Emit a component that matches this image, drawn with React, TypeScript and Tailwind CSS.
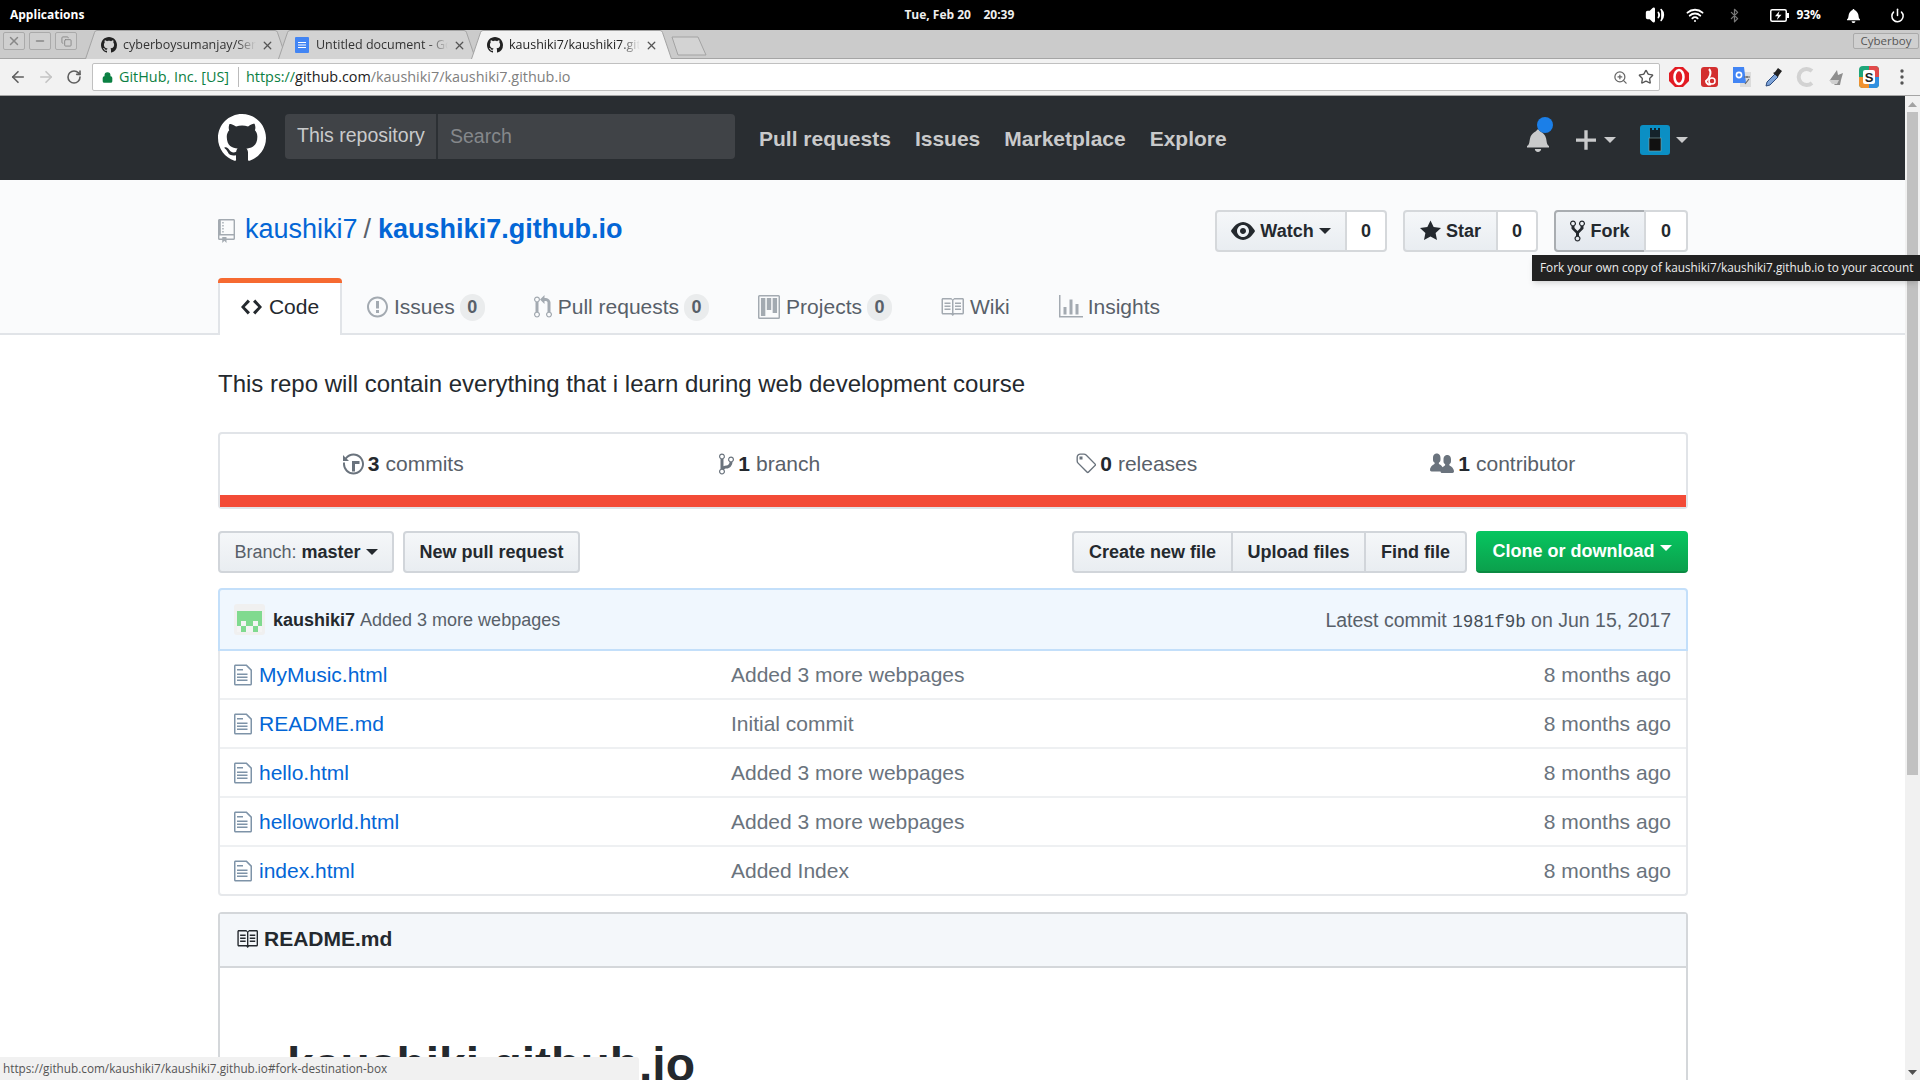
import React from 'react';
import { Volume2, Wifi, Bluetooth, Power, ArrowLeft, ArrowRight, RotateCw, Lock, ZoomIn, Star, X, Minus, Copy } from 'lucide-react';

const P = {
  github: 'M8 0C3.58 0 0 3.58 0 8c0 3.54 2.29 6.53 5.47 7.59.4.07.55-.17.55-.38 0-.19-.01-.82-.01-1.49-2.01.37-2.53-.49-2.69-.94-.09-.23-.48-.94-.82-1.13-.28-.15-.68-.52-.01-.53.63-.01 1.08.58 1.23.82.72 1.21 1.87.87 2.33.66.07-.52.28-.87.51-1.07-1.78-.2-3.64-.89-3.64-3.95 0-.87.31-1.59.82-2.15-.08-.2-.36-1.02.08-2.12 0 0 .67-.21 2.2.82.64-.18 1.32-.27 2-.27.68 0 1.36.09 2 .27 1.53-1.04 2.2-.82 2.2-.82.44 1.1.16 1.92.08 2.12.51.56.82 1.27.82 2.15 0 3.07-1.87 3.75-3.65 3.95.29.25.54.73.54 1.48 0 1.07-.01 1.93-.01 2.2 0 .21.15.46.55.38A8.013 8.013 0 0 0 16 8c0-4.42-3.58-8-8-8z',
  repo: 'M4 9H3V8h1v1zm0-3H3v1h1V6zm0-2H3v1h1V4zm0-2H3v1h1V2zm8-1v12c0 .55-.45 1-1 1H6v2l-1.5-1.5L3 16v-2H1c-.55 0-1-.45-1-1V1c0-.55.45-1 1-1h10c.55 0 1 .45 1 1zm-1 10H1v2h2v-1h3v1h5v-2zm0-10H2v9h9V1z',
  eye: 'M8.06 2C3 2 0 8 0 8s3 6 8.06 6C13 14 16 8 16 8s-3-6-7.94-6zM8 12c-2.2 0-4-1.78-4-4 0-2.2 1.8-4 4-4 2.22 0 4 1.8 4 4 0 2.22-1.78 4-4 4zm2-4c0 1.11-.89 2-2 2-1.11 0-2-.89-2-2 0-1.11.89-2 2-2 1.11 0 2 .89 2 2z',
  star: 'M14 6l-4.9-.64L7 1 4.9 5.36 0 6l3.6 3.26L2.67 14 7 11.67 11.33 14l-.93-4.74L14 6z',
  fork: 'M8 1a1.993 1.993 0 0 0-1 3.72V6L5 8 3 6V4.72A1.993 1.993 0 0 0 2 1a1.993 1.993 0 0 0-1 3.72V6.5l3 3v1.78A1.993 1.993 0 0 0 5 15a1.993 1.993 0 0 0 1-3.72V9.5l3-3V4.72A1.993 1.993 0 0 0 8 1zM2 4.2C1.34 4.2.8 3.65.8 3c0-.65.55-1.2 1.2-1.2.65 0 1.2.55 1.2 1.2 0 .65-.55 1.2-1.2 1.2zm3 10c-.66 0-1.2-.55-1.2-1.2 0-.65.55-1.2 1.2-1.2.65 0 1.2.55 1.2 1.2 0 .65-.55 1.2-1.2 1.2zm3-10c-.66 0-1.2-.55-1.2-1.2 0-.65.55-1.2 1.2-1.2.65 0 1.2.55 1.2 1.2 0 .65-.55 1.2-1.2 1.2z',
  code: 'M9.5 3L8 4.5 11.5 8 8 11.5 9.5 13 14 8 9.5 3zm-5 0L0 8l4.5 5L6 11.5 2.5 8 6 4.5 4.5 3z',
  issue: 'M7 2.3c3.14 0 5.7 2.56 5.7 5.7s-2.56 5.7-5.7 5.7A5.71 5.71 0 0 1 1.3 8c0-3.14 2.56-5.7 5.7-5.7zM7 1C3.14 1 0 4.14 0 8s3.14 7 7 7 7-3.14 7-7-3.14-7-7-7zm1 3H6v5h2V4zm0 6H6v2h2v-2z',
  pull: 'M11 11.28V5c-.03-.78-.34-1.47-.94-2.06C9.46 2.35 8.78 2.03 8 2H7V0L4 3l3 3V4h1c.27.02.48.11.69.31.21.2.3.42.31.69v6.28A1.993 1.993 0 0 0 10 15a1.993 1.993 0 0 0 1-3.72zm-1 2.92c-.66 0-1.2-.55-1.2-1.2 0-.65.55-1.2 1.2-1.2.65 0 1.2.55 1.2 1.2 0 .65-.55 1.2-1.2 1.2zM4 3c0-1.11-.89-2-2-2a1.993 1.993 0 0 0-1 3.72v6.56A1.993 1.993 0 0 0 2 15a1.993 1.993 0 0 0 1-3.72V4.72c.59-.34 1-.98 1-1.72zm-.8 10c0 .66-.55 1.2-1.2 1.2-.65 0-1.2-.55-1.2-1.2 0-.65.55-1.2 1.2-1.2.65 0 1.2.55 1.2 1.2zM2 4.2C1.34 4.2.8 3.65.8 3c0-.65.55-1.2 1.2-1.2.65 0 1.2.55 1.2 1.2 0 .65-.55 1.2-1.2 1.2z',
  project: 'M10 12h3V2h-3v10zm-4-2h3V2H6v8zm-4 4h3V2H2v12zm-1 1h13V1H1v14zM14 0H1a1 1 0 0 0-1 1v14a1 1 0 0 0 1 1h13a1 1 0 0 0 1-1V1a1 1 0 0 0-1-1z',
  book: 'M3 5h4v1H3V5zm0 3h4V7H3v1zm0 2h4V9H3v1zm11-5h-4v1h4V5zm0 2h-4v1h4V7zm0 2h-4v1h4V9zm2-6v9c0 .55-.45 1-1 1H9.5l-1 1-1-1H2c-.55 0-1-.45-1-1V3c0-.55.45-1 1-1h5.5l1 1 1-1H15c.55 0 1 .45 1 1zm-8 .5L7.5 3H2v9h6V3.5zm7-.5H9.5l-.5.5V12h6V3z',
  graph: 'M16 14v1H0V0h1v14h15zM5 13H3V8h2v5zm4 0H7V3h2v10zm4 0h-2V6h2v7z',
  history: 'M8 13H6V6h5v2H8v5zM7 1C4.81 1 2.87 2.02 1.59 3.59L0 2v4h4L2.5 4.5C3.55 3.17 5.17 2.3 7 2.3c3.14 0 5.7 2.56 5.7 5.7s-2.56 5.7-5.7 5.7A5.71 5.71 0 0 1 1.3 8c0-.34.03-.67.09-1H.08C.03 7.33 0 7.66 0 8c0 3.86 3.14 7 7 7s7-3.14 7-7-3.14-7-7-7z',
  branch: 'M10 5c0-1.11-.89-2-2-2a1.993 1.993 0 0 0-1 3.72v.3c-.02.52-.23.98-.63 1.38-.4.4-.86.61-1.38.63-.83.02-1.48.16-2 .45V4.72a1.993 1.993 0 0 0-1-3.72C.88 1 0 1.89 0 3a2 2 0 0 0 1 1.72v6.56c-.59.35-1 .99-1 1.72 0 1.11.89 2 2 2 1.11 0 2-.89 2-2 0-.53-.2-1-.53-1.36.09-.06.48-.41.59-.47.25-.11.56-.17.94-.17 1.05-.05 1.95-.45 2.75-1.25S8.95 7.77 9 6.73h-.02C9.59 6.37 10 5.73 10 5zM2 1.8c.66 0 1.2.55 1.2 1.2 0 .65-.55 1.2-1.2 1.2C1.35 4.2.8 3.65.8 3c0-.65.55-1.2 1.2-1.2zm0 12.41c-.66 0-1.2-.55-1.2-1.2 0-.65.55-1.2 1.2-1.2.65 0 1.2.55 1.2 1.2 0 .65-.55 1.2-1.2 1.2zm6-8c-.66 0-1.2-.55-1.2-1.2 0-.65.55-1.2 1.2-1.2.65 0 1.2.55 1.2 1.2 0 .65-.55 1.2-1.2 1.2z',
  tag: 'M7.73 1.73C7.26 1.26 6.62 1 5.96 1H3.5C2.13 1 1 2.13 1 3.5v2.47c0 .66.27 1.3.73 1.77l6.06 6.06c.39.39 1.02.39 1.41 0l4.59-4.59a.996.996 0 0 0 0-1.41L7.73 1.73zM2.38 7.09c-.31-.3-.47-.7-.47-1.13V3.5c0-.88.72-1.59 1.59-1.59h2.47c.42 0 .83.16 1.13.47l6.14 6.13-4.73 4.73-6.13-6.15zM3.01 3h2v2H3V3h.01z',
  org: 'M16 12.999c0 .439-.45 1-1 1H7.995c-.539 0-.994-.447-.995-.999H1c-.54 0-1-.561-1-1 0-2.634 3-4 3-4s.229-.409 0-1c-.841-.621-1.058-.59-1-3 .058-2.419 1.367-3 2.5-3s2.442.58 2.5 3c.058 2.41-.159 2.379-1 3-.229.59 0 1 0 1s1.549.711 2.42 2.088C9.196 9.369 10 8.999 10 8.999s.229-.409 0-1c-.841-.62-1.058-.59-1-3 .058-2.419 1.367-3 2.5-3s2.437.581 2.495 3c.059 2.41-.158 2.38-1 3-.229.59 0 1 0 1s3.005 1.366 3.005 4z',
  file: 'M6 5H2V4h4v1zM2 8h7V7H2v1zm0 2h7V9H2v1zm0 2h7v-1H2v1zm10-7.5V14c0 .55-.45 1-1 1H1c-.55 0-1-.45-1-1V2c0-.55.45-1 1-1h7.5L12 4.5zM11 5L8 2H1v12h10V5z',
  bell: 'M14 12v1H0v-1l.73-.58c.77-.77.81-2.55 1.19-4.42C2.69 3.23 6 2 6 2c0-.55.45-1 1-1s1 .45 1 1c0 0 3.39 1.23 4.16 5 .38 1.88.42 3.66 1.19 4.42l.66.58H14zm-7 4c1.11 0 2-.89 2-2H5c0 1.11.89 2 2 2z',
  plus: 'M12 9H7v5H5V9H0V7h5V2h2v5h5v2z',
};

const Oct = ({ d, w, h, vw, className }: { d: string; w: number; h: number; vw: number; className?: string }) => (
  <svg width={w} height={h} viewBox={`0 0 ${vw} 16`} preserveAspectRatio="none" fill="currentColor" className={`shrink-0 ${className ?? ''}`}>
    <path fillRule="evenodd" d={d} />
  </svg>
);

const Caret = ({ className }: { className: string }) => (
  <span className={`inline-block w-0 h-0 border-x-transparent border-x-[6px] border-t-[6px] ${className}`} />
);

const ChromeTab = ({ left, width, active, icon, title, textW }: { left: number; width: number; active?: boolean; icon: React.ReactNode; title: string; textW: number }) => (
  <div className="relative h-[29px] shrink-0" style={{ marginLeft: left, width }}>
    <svg className="absolute inset-0" width={width} height={29}>
      <path d={`M0.5 29 L9.5 2.5 Q10 0.5 12 0.5 L${width - 12} 0.5 Q${width - 10} 0.5 ${width - 9.5} 2.5 L${width - 0.5} 29`} fill={active ? '#f2f2f2' : '#d3d3d3'} stroke="#a3a3a3" />
    </svg>
    <div className="absolute inset-0 flex items-center pl-[16px] pt-[1px]">
      {icon}
      <span
        className={`ml-[6px] overflow-hidden whitespace-nowrap text-[12.5px] leading-[18px] [mask-image:linear-gradient(to_right,black_85%,transparent)] ${active ? 'text-[#222]' : 'text-[#333]'}`}
        style={{ width: textW }}
      >
        {title}
      </span>
      <X size={13} strokeWidth={2.4} className="ml-[5px] text-[#555]" />
    </div>
  </div>
);

const TopBar = () => (
  <div className="h-[30px] bg-black text-white flex items-center relative font-['Open_Sans',sans-serif] text-[12px] font-bold shrink-0">
    <span className="ml-[10px]">Applications</span>
    <span className="ml-[820px] w-[112px] whitespace-pre text-[#eee]">Tue, Feb 20    20:39</span>
    <Volume2 size={20} className="ml-[629px] fill-white" />
    <Wifi size={18} strokeWidth={2.6} className="ml-[21px]" />
    <Bluetooth size={15} className="ml-[23px] text-[#777]" />
    <svg width={19} height={13} viewBox="0 0 19 13" className="ml-[28px] shrink-0">
      <rect x={0.75} y={0.75} width={15.5} height={11.5} rx={1.5} fill="none" stroke="#fff" strokeWidth={1.5} />
      <rect x={17} y={4} width={2} height={5} fill="#fff" />
      <path d="M9.5 2L5 7.2h3L6.8 11l4.7-5.2h-3z" fill="#fff" />
    </svg>
    <span className="ml-[7px] text-[12px]">93%</span>
    <Oct d={P.bell} w={13} h={15} vw={14} className="ml-[26px]" />
    <Power size={15} strokeWidth={2.4} className="ml-[30px]" />
  </div>
);

const TabStrip = () => (
  <div className="h-[28px] bg-[#cbcbcb] flex items-start border-b border-[#a5a5a5] relative font-['Open_Sans',sans-serif] shrink-0 box-content">
    <div className="flex gap-[4px] self-start mt-[2px] ml-[3px] w-[75px] shrink-0">
      {[<X size={14} key="x" strokeWidth={2.5} />, <Minus size={12} key="m" strokeWidth={3} />, <Copy size={11} key="c" />].map((ic, i) => (
        <div key={i} className="w-[22px] h-[18px] border border-[#aaa] rounded-[2px] bg-[#cfcfcf] flex items-center justify-center text-[#888]">{ic}</div>
      ))}
    </div>
    <ChromeTab left={7} width={202} textW={133} title="cyberboysumanjay/Sem" icon={<Oct d={P.github} w={16} h={16} vw={16} className="text-[#222]" />} />
    <ChromeTab left={-9} width={198} textW={132} title="Untitled document - Google" icon={
      <svg width={16} height={16} viewBox="0 0 16 16" className="shrink-0"><rect x={1} width={14} height={16} rx={1} fill="#4285f4" /><path d="M4 5h8v1H4zm0 2.5h8v1H4zm0 2.5h8v1H4z" fill="#fff" /></svg>
    } />
    <ChromeTab left={-5} width={201} active textW={131} title="kaushiki7/kaushiki7.github.io" icon={<Oct d={P.github} w={16} h={16} vw={16} className="text-[#222]" />} />
    <svg width={36} height={20} className="ml-[-1px] mt-[6px] shrink-0"><path d="M1 1 L27 1 L35 19 L7 19 Z" fill="#d3d3d3" stroke="#a3a3a3" /></svg>
    <div className="absolute right-[1px] top-[3px] w-[66px] h-[16px] border border-[#aaa] rounded-[2px] bg-[#d0d0d0] text-[11.5px] leading-[14px] text-[#555] text-center">Cyberboy</div>
  </div>
);

const Extensions = () => (
  <div className="flex items-center gap-[10px] ml-[8px]">
    <svg width={22} height={22} viewBox="0 0 22 22" className="mr-[-1px]"><path d="M7 1h8l6 6v8l-6 6H7l-6-6V7z" fill="#e21b23" /><ellipse cx={11} cy={11} rx={4.5} ry={7} fill="none" stroke="#fff" strokeWidth={2.5} /></svg>
    <svg width={22} height={22} viewBox="0 0 22 22"><rect x={2} y={1} width={17} height={20} rx={3} fill="#d32f2f" /><path d="M10 3c3 3 1 9-3 12 0 3 3 4 5 3" fill="none" stroke="#fff" strokeWidth={2} /><circle cx={13} cy={15} r={3} fill="none" stroke="#fff" strokeWidth={1.5} /></svg>
    <svg width={22} height={22} viewBox="0 0 22 22"><rect x={9} y={6} width={11} height={15} fill="#dcdcdc" /><path d="M2 1h11l2 16H2z" fill="#4285f4" /><circle cx={8} cy={9} r={2.6} fill="none" stroke="#fff" strokeWidth={1.6} /><path d="M13 11h6M16 10v2M14 18l4-5" stroke="#666" strokeWidth={1.2} /></svg>
    <svg width={20} height={22} viewBox="0 0 20 22" className="ml-[1px]"><path d="M2 20l1-4 8-8 3 3-8 8z" fill="#7da3d8" stroke="#2b4a7d" /><path d="M11 6l3-4 4 3-3 4-1 2-5-4z" fill="#222" /></svg>
    <svg width={22} height={22} viewBox="0 0 22 22"><path d="M18 5a8 8 0 1 0 0 12" fill="none" stroke="#d2d2d2" strokeWidth={4} /></svg>
    <svg width={22} height={22} viewBox="0 0 22 22"><path d="M4 14l7-10 1 5 5-2-2 7-1 5H9z" fill="#8e8e8e" /><path d="M3 14h10l-2 4H6z" fill="#cfcfcf" /></svg>
    <svg width={20} height={22} viewBox="0 0 20 22" className="ml-[1px]"><rect width={20} height={22} rx={4} fill="#1fa67a" /><path d="M0 11h10v11H4a4 4 0 0 1-4-4z" fill="#f0912f" /><path d="M10 11h10v7a4 4 0 0 1-4 4h-6z" fill="#2f8fe0" /><path d="M10 0h6a4 4 0 0 1 4 4v7H10z" fill="#e24a4a" /><rect x={4} y={4} width={12} height={14} rx={2} fill="#fff" /><text x={10} y={16} fontSize={13} fontWeight={700} textAnchor="middle" fill="#222" fontFamily="Liberation Sans, sans-serif">S</text></svg>
    <svg width={4} height={16} viewBox="0 0 4 16" className="ml-[11px]" fill="#555"><circle cx={2} cy={2} r={1.7} /><circle cx={2} cy={8} r={1.7} /><circle cx={2} cy={14} r={1.7} /></svg>
  </div>
);

const Toolbar = () => (
  <div className="h-[36px] bg-[#f2f2f2] border-b border-[#a5a5a5] flex items-center font-['Open_Sans',sans-serif] shrink-0 box-content">
    <ArrowLeft size={18} strokeWidth={2.2} className="ml-[9px] text-[#5f5f5f]" />
    <ArrowRight size={18} strokeWidth={2.2} className="ml-[10px] text-[#c4c4c4]" />
    <RotateCw size={16} strokeWidth={2.4} className="ml-[11px] text-[#5f5f5f]" />
    <div className="ml-[10px] w-[1568px] h-[28px] bg-white border border-[#c0c0c0] rounded-[2px] flex items-center text-[14.4px]">
      <Lock size={11} strokeWidth={3} className="ml-[9px] text-[#0b8043] fill-[#0b8043]" />
      <span className="ml-[6px] w-[110px] text-[#0b8043] whitespace-nowrap">GitHub, Inc. [US]</span>
      <span className="ml-[9px] h-[20px] w-px bg-[#bbb]" />
      <span className="ml-[7px] whitespace-nowrap">
        <span className="text-[#0b8043]">https://</span>
        <span className="text-[#222]">github.com</span>
        <span className="text-[#808080]">/kaushiki7/kaushiki7.github.io</span>
      </span>
      <ZoomIn size={15} className="ml-auto text-[#666]" />
      <Star size={16} className="ml-[10px] mr-[5px] text-[#555]" />
    </div>
    <Extensions />
  </div>
);

const Header = () => (
  <div className="h-[84px] bg-[#292d31] shrink-0 pl-[218px] pr-[217px] flex items-center">
    <Oct d={P.github} w={48} h={48} vw={16} className="text-white" />
    <div className="ml-[19px] w-[450px] h-[45px] mt-[-4px] rounded-[4px] bg-[#404347] flex items-center text-[19.5px] shrink-0">
      <span className="pl-[12px] w-[153px] h-full flex items-center border-r-2 border-[#2c3034] text-[#c9cacb]">This repository</span>
      <span className="pl-[12px] pt-[2px] text-[#85888b]">Search</span>
    </div>
    <nav className="ml-[24px] mt-[2px] flex gap-[24px] text-[21px] font-bold text-[#c9cacb] whitespace-nowrap">
      <span>Pull requests</span>
      <span>Issues</span>
      <span>Marketplace</span>
      <span>Explore</span>
    </nav>
    <div className="ml-auto mt-[4px] flex items-center text-[#c9cacb]">
      <div className="relative">
        <Oct d={P.bell} w={22} h={24} vw={14} />
        <span className="absolute left-[10px] top-[-11px] w-[16px] h-[16px] rounded-full bg-[#1b7fe8]" />
      </div>
      <Oct d={P.plus} w={20} h={26} vw={12} className="ml-[27px]" />
      <Caret className="ml-[8px] border-t-[#c9cacb]" />
      <div className="ml-[24px] w-[30px] h-[30px] rounded-[3px] bg-[#0b8fc4] flex justify-center items-center">
        <svg width={14} height={24} viewBox="0 0 14 24"><path d="M2 0h2v2h2V0h2v2h2V0h2v10H2z" fill="#15232b" /><rect x={1} y={10} width={12} height={13} fill="#111" stroke="#8aa" strokeWidth={0.6} /></svg>
      </div>
      <Caret className="ml-[6px] border-t-[#c9cacb]" />
    </div>
  </div>
);

const Social = ({ icon, label, count, w, cw, caret, pressed }: { icon: React.ReactNode; label: string; count: string; w: number; cw: number; caret?: boolean; pressed?: boolean }) => (
  <div className="flex h-[42px] text-[18px] font-bold text-[#24292e]">
    <div
      className={`flex items-center justify-center gap-[5px] border-2 rounded-l-[4px] bg-gradient-to-b ${pressed ? 'border-[#a9adb1] from-[#f0f3f6] to-[#e3e8ee]' : 'border-[#d5d8db] from-[#f5f7f9] to-[#e9edf1]'}`}
      style={{ width: w }}
    >
      {icon}
      <span>{label}</span>
      {caret && <Caret className="border-t-[#24292e]" />}
    </div>
    <div className="ml-[-2px] flex items-center justify-center bg-white border-2 border-[#d5d8db] rounded-r-[4px]" style={{ width: cw }}>{count}</div>
  </div>
);

const TabItem = ({ icon, label, count, gap = 6, className }: { icon: React.ReactNode; label: string; count?: string; gap?: number; className?: string }) => (
  <div className={`flex items-center text-[21px] text-[#586069] ${className ?? ''}`}>
    <span className="text-[#a3aab1] flex items-center" style={{ marginRight: gap }}>{icon}</span>
    {label}
    {count && <span className="ml-[5px] w-[25px] h-[27px] rounded-full bg-[#eaeced] text-[18px] font-bold text-[#586069] flex items-center justify-center">{count}</span>}
  </div>
);

const RepoHead = () => (
  <div className="h-[155px] bg-[#fafbfc] border-b-2 border-[#e1e4e8] shrink-0 pl-[218px] pr-[217px] pt-[30px] box-border">
    <div className="h-[42px] flex items-center">
      <div className="flex items-center text-[27px] mt-[-4px]">
        <Oct d={P.repo} w={17} h={24} vw={12} className="text-[#a3aab1] mt-[3px]" />
        <a className="ml-[10px] text-[#0366d6]">kaushiki7</a>
        <span className="mx-[6px] text-[#586069] pr-[1px]">/</span>
        <a className="text-[#0366d6] font-bold">kaushiki7.github.io</a>
      </div>
      <div className="ml-auto flex gap-[16px]">
        <Social w={132} cw={42} label="Watch" count="0" caret icon={<Oct d={P.eye} w={24} h={24} vw={16} />} />
        <Social w={95} cw={42} label="Star" count="0" icon={<Oct d={P.star} w={21} h={24} vw={14} />} />
        <Social w={92} cw={44} pressed label="Fork" count="0" icon={<Oct d={P.fork} w={15} h={24} vw={10} />} />
      </div>
    </div>
    <div className="h-[58px] mt-[26px] flex items-center">
      <div className="relative self-start w-[124px] h-[57px] bg-white border-x-2 border-[#e1e4e8] rounded-t-[4px] flex items-center justify-center text-[21px] text-[#24292e] gap-[7px]">
        <span className="absolute left-[-2px] right-[-2px] top-0 h-[5px] bg-[#f66a31] rounded-t-[4px]" />
        <Oct d={P.code} w={21} h={24} vw={14} />
        Code
      </div>
      <div className="flex items-center ml-[25px] gap-[48px]">
        <div className="flex gap-[49px]">
          <TabItem label="Issues" count="0" icon={<Oct d={P.issue} w={21} h={24} vw={14} />} />
          <TabItem label="Pull requests" count="0" icon={<Oct d={P.pull} w={18} h={24} vw={12} />} />
          <TabItem label="Projects" count="0" icon={<Oct d={P.project} w={22} h={24} vw={15} />} />
        </div>
        <TabItem label="Wiki" icon={<Oct d={P.book} w={24} h={24} vw={16} />} />
        <TabItem label="Insights" gap={5} className="ml-[1px]" icon={<Oct d={P.graph} w={24} h={24} vw={16} />} />
      </div>
    </div>
  </div>
);

const Stat = ({ icon, n, label }: { icon: React.ReactNode; n: string; label: string }) => (
  <div className="flex-1 flex items-center justify-center text-[21px] text-[#586069] pb-[2px]">
    <span className="text-[#6a737d] mr-[4px]">{icon}</span>
    <b className="text-[#24292e] mr-[6px]">{n}</b>
    {label}
  </div>
);

const Btn = ({ children, className }: { children: React.ReactNode; className?: string }) => (
  <div className={`h-[42px] flex items-center justify-center border-2 border-[#d1d5da] bg-gradient-to-b from-[#f5f7f9] to-[#e9edf1] text-[18px] font-bold text-[#24292e] whitespace-nowrap ${className ?? ''}`}>
    {children}
  </div>
);

const files = [
  { name: 'MyMusic.html', msg: 'Added 3 more webpages' },
  { name: 'README.md', msg: 'Initial commit' },
  { name: 'hello.html', msg: 'Added 3 more webpages' },
  { name: 'helloworld.html', msg: 'Added 3 more webpages' },
  { name: 'index.html', msg: 'Added Index' },
];

const RepoBody = () => (
  <div className="bg-white w-[1470px] ml-[218px] pt-[31px]">
    <p className="h-[36px] text-[24px] leading-[36px] text-[#24292e]">This repo will contain everything that i learn during web development course</p>

    <div className="mt-[30px] h-[77px] border-2 border-[#e1e4e8] rounded-[4px] flex flex-col">
      <div className="flex-1 flex">
        <Stat n="3" label="commits" icon={<Oct d={P.history} w={21} h={24} vw={14} />} />
        <Stat n="1" label="branch" icon={<Oct d={P.branch} w={15} h={24} vw={10} />} />
        <Stat n="0" label="releases" icon={<Oct d={P.tag} w={21} h={24} vw={14} />} />
        <Stat n="1" label="contributor" icon={<Oct d={P.org} w={24} h={24} vw={16} />} />
      </div>
      <div className="h-[12px] bg-[#f34b37]" />
    </div>

    <div className="mt-[22px] flex h-[42px]">
      <Btn className="w-[176px] rounded-[4px] gap-[5px]">
        <span className="font-normal text-[#586069]">Branch:</span>
        <span>master</span>
        <Caret className="border-t-[#24292e]" />
      </Btn>
      <Btn className="ml-[9px] w-[177px] rounded-[4px]">New pull request</Btn>
      <div className="ml-auto flex">
        <Btn className="w-[161px] rounded-l-[4px]">Create new file</Btn>
        <Btn className="w-[135px] ml-[-2px]">Upload files</Btn>
        <Btn className="w-[103px] ml-[-2px] rounded-r-[4px]">Find file</Btn>
      </div>
      <div className="ml-[9px] w-[212px] h-[42px] flex items-center justify-center rounded-[4px] bg-gradient-to-b from-[#06c660] to-[#0ba04c] border-b-2 border-[#0a8a42] text-[18px] font-bold text-white">
        Clone or download
        <Caret className="ml-[5px] mb-[6px] border-t-white" />
      </div>
    </div>

    <div className="mt-[15px] h-[63px] bg-[#f0f7fe] border-2 border-[#c3dffa] rounded-t-[4px] flex items-center pl-[14px] pr-[15px] text-[18px] text-[#586069]">
      <svg width={31} height={31} viewBox="0 0 31 31" className="shrink-0 rounded-[3px]">
        <rect width={31} height={31} fill="#f0f0f0" />
        <rect x={3} y={7} width={25} height={21} fill="#80da8f" />
        <path d="M3 22h4v6H3zM12 22h7v6h-7zM24 22h4v6h-4zM7 17h5v5H7zM19 17h5v5h-5z" fill="#f4f4f4" />
      </svg>
      <b className="ml-[8px] pt-[2px] text-[#24292e]">kaushiki7</b>
      <span className="ml-[5px] pt-[2px]">Added 3 more webpages</span>
      <span className="ml-auto pt-[2px] text-[19.5px]">Latest commit <span className="font-['Liberation_Mono',monospace] text-[#444d56] text-[17.5px]">1981f9b</span> on Jun 15, 2017</span>
    </div>

    <div className="border-x-2 border-b-2 border-[#e6e8eb] rounded-b-[4px]">
      {files.map((f, i) => (
        <div key={f.name} className={`flex items-center text-[21px] pl-[14px] pr-[15px] ${i < files.length - 1 ? 'h-[49px] border-b-2 border-[#eef0f2]' : 'h-[47px]'}`}>
          <Oct d={P.file} w={18} h={24} vw={12} className="text-[#7e93a8]" />
          <a className="ml-[7px] w-[472px] text-[#0366d6]">{f.name}</a>
          <span className="text-[#6a737d]">{f.msg}</span>
          <span className="ml-auto text-[#6a737d]">8 months ago</span>
        </div>
      ))}
    </div>

    <div className="mt-[16px] border-2 border-[#d4d7da] rounded-t-[4px] h-[300px]">
      <div className="h-[54px] bg-[#f4f7fa] border-b-2 border-[#d4d7da] flex items-center pl-[16px] pb-[2px] text-[21px] font-bold text-[#24292e]">
        <Oct d={P.book} w={22} h={24} vw={16} className="mr-[6px] text-[#24292e]" />
        README.md
      </div>
      <h1 className="ml-[67px] mt-[68px] text-[48px] leading-[58px] font-bold text-[#24292e]">kaushiki.github.io</h1>
    </div>
  </div>
);

const Scrollbar = () => (
  <div className="w-[15px] bg-[#f1f1f1] flex flex-col items-center shrink-0">
    <svg width={9} height={5} className="mt-[6px] shrink-0"><path d="M0 5 L4.5 0 L9 5z" fill="#a3a3a3" /></svg>
    <div className="mt-[5px] w-[11px] h-[663px] bg-[#c1c1c1]" />
    <svg width={9} height={5} className="mt-auto mb-[5px] shrink-0"><path d="M0 0 L4.5 5 L9 0z" fill="#505050" /></svg>
  </div>
);

export default function App() {
  return (
    <div className="relative w-[1920px] h-[1080px] overflow-hidden flex flex-col bg-white font-['Liberation_Sans',sans-serif]">
      <TopBar />
      <TabStrip />
      <Toolbar />
      <div className="flex flex-1 min-h-0">
        <div className="flex-1 min-w-0 overflow-hidden">
          <Header />
          <RepoHead />
          <RepoBody />
        </div>
        <Scrollbar />
      </div>
      {/* overlays: hover tooltip and link status bubble */}
      <div className="absolute left-[1532px] top-[255px] w-[388px] h-[26px] bg-[#222] text-[#eee] shadow-md font-['Open_Sans',sans-serif] text-[11.8px] leading-[25px] pl-[8px] whitespace-nowrap">
        Fork your own copy of kaushiki7/kaushiki7.github.io to your account
      </div>
      <div className="absolute left-0 bottom-0 w-[639px] h-[23px] bg-[#f1f1f1] rounded-tr-[3px] font-['Open_Sans',sans-serif] text-[11.75px] leading-[23px] pl-[3px] text-[#555] whitespace-nowrap">
        https://github.com/kaushiki7/kaushiki7.github.io#fork-destination-box
      </div>
    </div>
  );
}
